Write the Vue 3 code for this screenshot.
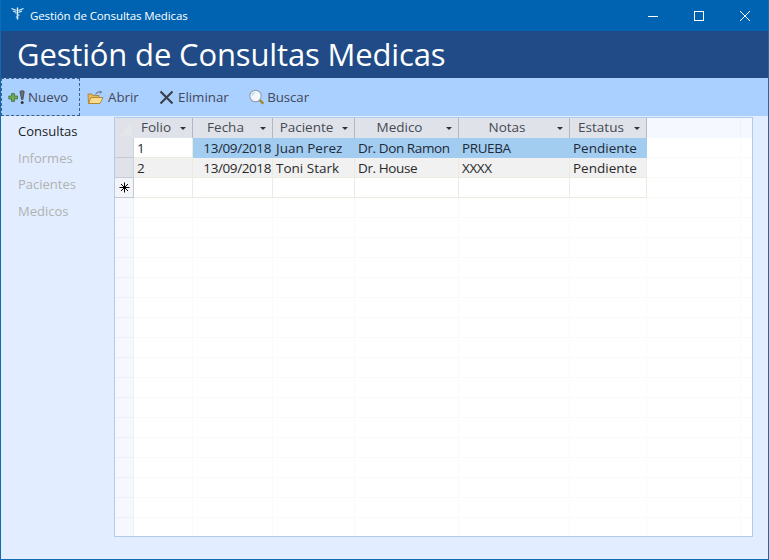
<script setup>
const nav = [
  { label: 'Consultas', active: true },
  { label: 'Informes' },
  { label: 'Pacientes' },
  { label: 'Medicos' }
]
const columns = ['Folio', 'Fecha', 'Paciente', 'Medico', 'Notas', 'Estatus']
const records = [
  { id: 1, folio: '1', fecha: '13/09/2018', paciente: 'Juan Perez', medico: 'Dr. Don Ramon', notas: 'PRUEBA', estatus: 'Pendiente', selected: true },
  { id: 2, folio: '2', fecha: '13/09/2018', paciente: 'Toni Stark', medico: 'Dr. House', notas: 'XXXX', estatus: 'Pendiente', alt: true }
]
const blanks = Array.from({ length: 17 }, (_, i) => i)
</script>

<template>
  <div class="window">
    <div class="titlebar">
      <svg class="app-icon" width="13" height="13" viewBox="0 0 13 13">
        <path d="M0.5 1.5 L5.5 3.5 M12.5 1.5 L7.5 3.5 M2 4 L5.5 5.5 M11 4 L7.5 5.5" stroke="#dff0ff" stroke-width="1.3" fill="none"/>
        <path d="M6.5 0.5 V12.5" stroke="#ffffff" stroke-width="1.3"/>
        <path d="M4.5 6.5 C6 7.5 8 7 8.5 8 C8.5 9 5 9 4.8 10 C5 11 7 10.5 7.5 11" stroke="#9fcbf0" stroke-width="1" fill="none"/>
      </svg>
      <span class="title-text">Gestión de Consultas Medicas</span>
      <div class="controls">
        <span class="ctl"><svg width="10" height="10" viewBox="0 0 10 10"><path d="M0 5.5 H10" stroke="#fff" stroke-width="1"/></svg></span>
        <span class="ctl"><svg width="10" height="10" viewBox="0 0 10 10"><rect x="0.5" y="0.5" width="9" height="9" fill="none" stroke="#fff" stroke-width="1"/></svg></span>
        <span class="ctl"><svg width="10" height="10" viewBox="0 0 10 10"><path d="M0 0 L10 10 M10 0 L0 10" stroke="#fff" stroke-width="1"/></svg></span>
      </div>
    </div>

    <div class="banner">Gestión de Consultas Medicas</div>

    <div class="toolbar">
      <button class="tool tool-new">
        <svg width="17" height="15" viewBox="0 0 17 15">
          <path d="M3.5 3.5 H6.5 V6 H9.5 V9 H6.5 V11.5 H3.5 V9 H0.8 V6 H3.5 Z" fill="#6ea856" stroke="#3a6a35" stroke-width="0.7"/>
          <path d="M12 1.6 C12 0.4 16.4 0.4 16.2 1.8 L14.9 9.5 H13.6 Z" fill="#6a6f76" stroke="#34373c" stroke-width="0.7"/>
          <circle cx="14.2" cy="12.4" r="1.5" fill="#33363a"/>
        </svg>
        <span>Nuevo</span>
      </button>
      <button class="tool tool-open">
        <svg width="17" height="15" viewBox="0 0 17 15">
          <path d="M1 4 H5 L6 5.5 H12 V13.5 H1.5 Z" fill="#e6b95a" stroke="#a67c2c" stroke-width="0.8"/>
          <path d="M1.5 13.5 L4 7.5 H16 L13 13.5 Z" fill="#fbdc8a" stroke="#a67c2c" stroke-width="0.8"/>
          <path d="M8.5 4.5 C9.5 2.5 11.5 1.5 13.5 2" stroke="#6e7f92" stroke-width="1.1" fill="none"/>
          <path d="M12.5 0.5 L15.5 2 L13 4 Z" fill="#6e7f92"/>
        </svg>
        <span>Abrir</span>
      </button>
      <button class="tool tool-del">
        <svg width="15" height="15" viewBox="0 0 15 15">
          <path d="M1.5 1.5 L13.5 13.5 M13.5 1.5 L1.5 13.5" stroke="#3a3f47" stroke-width="2.1"/>
        </svg>
        <span>Eliminar</span>
      </button>
      <button class="tool tool-find">
        <svg width="16" height="16" viewBox="0 0 16 16">
          <path d="M11 11 L15 15" stroke="#a88428" stroke-width="2.4"/>
          <circle cx="6.8" cy="7" r="6" fill="#f3f8fe" stroke="#8d9bab" stroke-width="1.1"/>
          <path d="M3.5 6.5 A3.5 3.5 0 0 1 6.5 3.5" stroke="#c2d4e8" stroke-width="1.2" fill="none"/>
        </svg>
        <span>Buscar</span>
      </button>
    </div>

    <div class="body">
      <nav class="side">
        <a v-for="n in nav" :key="n.label" class="side-link" :class="{ active: n.active }">{{ n.label }}</a>
      </nav>

      <div class="sheet">
        <div class="row head">
          <div class="corner"><svg width="16" height="16" viewBox="0 0 16 16"><path d="M15 2 V15 H2 Z" fill="#e4e6ea"/></svg></div>
          <div v-for="c in columns" :key="c" class="hcell">
            <span class="hlabel">{{ c }}</span><i class="caret"></i>
          </div>
          <div class="void"></div>
          <div class="void last"></div>
        </div>

        <div v-for="r in records" :key="r.id" class="row data" :class="{ selected: r.selected, alt: r.alt }">
          <div class="sel"></div>
          <div class="cell folio">{{ r.folio }}</div>
          <div class="cell right tight">{{ r.fecha }}</div>
          <div class="cell">{{ r.paciente }}</div>
          <div class="cell tight">{{ r.medico }}</div>
          <div class="cell tight">{{ r.notas }}</div>
          <div class="cell">{{ r.estatus }}</div>
          <div class="blank-cell"></div>
          <div class="blank-cell last"></div>
        </div>

        <div class="row newrow">
          <div class="sel star">
            <svg width="13" height="13" viewBox="0 0 13 13"><path d="M6.5 1.5 V11.5 M1.5 6.5 H11.5 M3 3 L10 10 M10 3 L3 10" stroke="#000" stroke-width="1"/></svg>
          </div>
          <div v-for="c in columns" :key="c" class="cell"></div>
          <div class="blank-cell"></div>
          <div class="blank-cell last"></div>
        </div>

        <div v-for="b in blanks" :key="b" class="row blank">
          <div class="sel faint"></div>
          <div v-for="c in columns" :key="c" class="blank-cell"></div>
          <div class="blank-cell"></div>
          <div class="blank-cell last"></div>
        </div>
      </div>
    </div>
  </div>
</template>

<style>
html, body { margin: 0; padding: 0; }
</style>

<style scoped>
.window {
  width: 769px;
  height: 560px;
  box-sizing: border-box;
  border: 1px solid #0f6cb4;
  border-top: 0;
  display: flex;
  flex-direction: column;
  background: #e2eeff;
  font-family: "Open Sans", "Noto Sans", sans-serif;
  overflow: hidden;
}
.titlebar {
  height: 31px;
  flex: none;
  background: #0063b1;
  color: #fff;
  display: flex;
  align-items: center;
  padding-left: 10px;
  font-size: 11.5px;
}
.app-icon { margin-right: 6px; margin-top: -4px; }
.title-text { letter-spacing: -0.1px; margin-top: -1px; }
.controls { margin-left: auto; display: flex; }
.ctl {
  width: 46px;
  height: 30px;
  display: flex;
  align-items: center;
  justify-content: center;
}
.banner {
  height: 47px;
  flex: none;
  background: #204b87;
  color: #fff;
  font-size: 31px;
  line-height: 46px;
  padding-left: 16px;
  letter-spacing: -0.15px;
}
.toolbar {
  height: 38px;
  flex: none;
  background: #a9d0ff;
  display: flex;
  align-items: stretch;
}
.tool {
  border: 1px dashed transparent;
  background: none;
  padding: 0;
  display: flex;
  align-items: center;
  font: inherit;
  font-size: 13.3px;
  color: #44485a;
  box-sizing: border-box;
}
.tool-new { width: 79px; border-color: #3e5f86; padding-left: 6px; gap: 3px; }
.tool-open { width: 69px; padding-left: 6px; gap: 4px; }
.tool-del { width: 91px; padding-left: 9px; gap: 4px; }
.tool-find { width: 70px; padding-left: 8px; gap: 3px; letter-spacing: -0.1px; }

.body { flex: 1; display: flex; min-height: 0; padding: 1px 15px 22px 0; }
.side {
  width: 113px;
  flex: none;
  display: flex;
  flex-direction: column;
  padding-top: 1px;
  box-sizing: border-box;
}
.side-link {
  height: 26.7px;
  line-height: 26.7px;
  padding-left: 17px;
  font-size: 13px;
  color: #b1b1b1;
}
.side-link.active { color: #1d1d1d; }

.sheet {
  flex: 1;
  border: 1px solid #b2cbe8;
  background: #fff;
  overflow: hidden;
  box-sizing: border-box;
}
.row {
  display: grid;
  grid-template-columns: 19px 59px 80px 82px 104px 111px 77px 94px 11px;
  height: 20px;
  font-size: 13.5px;
}
.row > * { box-sizing: border-box; height: 20px; }

.head > * { background: #dfe2e8; }
.corner { display: flex; align-items: center; justify-content: center; background: #dfe2e8; padding-top: 1px; }
.hcell {
  display: flex;
  align-items: center;
  border-right: 1px solid #b3b9c2;
  color: #454a55;
  padding: 0 14px 2px 0;
}
.hlabel { flex: 1; text-align: center; }
.caret {
  flex: none;
  width: 0;
  height: 0;
  border-left: 3px solid transparent;
  border-right: 3px solid transparent;
  border-top: 3px solid #333;
  margin-right: -8px;
  margin-left: 2px;
  margin-top: 3px;
}
.head > .void { background: #f6f8ff; border-right: 1px solid #f0f1f6; }
.head > .void.last { border-right: 0; }

.cell {
  border-right: 1px solid #ecebdf;
  border-bottom: 1px solid #ecebdf;
  padding: 0 0 0 3px;
  line-height: 20px;
  color: #2a2a2a;
  white-space: nowrap;
  overflow: hidden;
}
.cell.tight { letter-spacing: -0.4px; }
.cell.right { text-align: right; padding: 0 1px 0 0; }
.sel {
  background: #dfe2e8;
  border-right: 1px solid #cfd3da;
  border-bottom: 1px solid #c7ccd4;
}
.star { background: #f3f4f8; display: flex; align-items: center; justify-content: center; border-color: #c4c8d0; }
.faint { background: #f6f8ff; border-color: #eeeff5; }
.blank-cell { border-right: 1px solid #fbfaf5; border-bottom: 1px solid #fafaf8; }
.blank-cell.last { border-right: 0; }
.data .blank-cell { background: #fff; }
.data.selected .cell { background: #a2cdf0; border-color: #a2cdf0; color: #1f2a38; }
.data.selected .folio { background: #fff; border-color: #ecebdf; color: #2a2a2a; }
.data.alt .cell { background: #f1f1f1; }
</style>
